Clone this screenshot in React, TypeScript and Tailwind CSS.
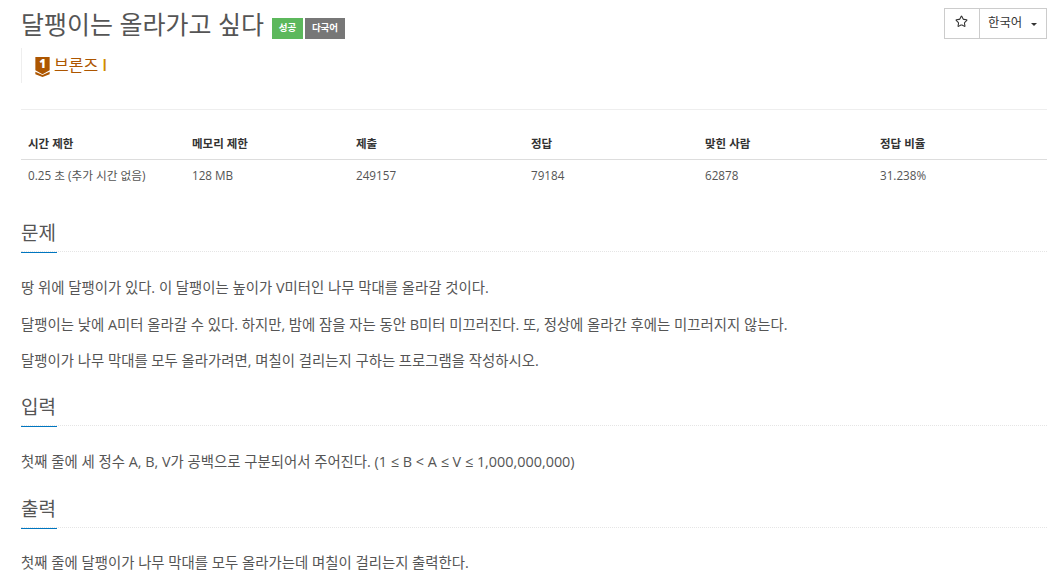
import { Star } from "lucide-react";

const columns = [
  { title: "시간 제한", value: "0.25 초 (추가 시간 없음)", width: "w-[164px]" },
  { title: "메모리 제한", value: "128 MB", width: "w-[164px]" },
  { title: "제출", value: "249157", width: "w-[175px]" },
  { title: "정답", value: "79184", width: "w-[174px]" },
  { title: "맞힌 사람", value: "62878", width: "w-[175px]" },
  { title: "정답 비율", value: "31.238%", width: "flex-1" },
];

const font = "font-['Open_Sans','Noto_Sans_CJK_KR',sans-serif]";

const Headline = ({ children, className }: { children: string; className: string }) => (
  <div className={`${className} h-[34px] border-b border-dotted border-[#e5e5e5]`}>
    <h2 className="inline-block h-[35px] w-[36px] whitespace-nowrap border-b border-[#0076c0] pt-[1px] text-[19px] leading-[28px] text-[#555]">
      {children}
    </h2>
  </div>
);

const Para = ({ children }: { children: string }) => (
  <p className="mt-[14.5px] h-[22px] text-[14.4px] leading-[22px] text-[#555]">{children}</p>
);

export default function App() {
  return (
    <div className={`${font} h-[584px] w-[1055px] overflow-hidden bg-white pl-[21px] pr-[8px] text-[#333]`}>
      <div className="flex items-start justify-between pt-[7px]">
        <div className="flex items-start">
          <h1 className="text-[25px] leading-[34px] text-[#555]">달팽이는 올라가고 싶다</h1>
          <span className="ml-[8px] mt-[11px] flex h-[21px] w-[31px] items-center justify-center bg-[#5cb85c] text-[9.5px] font-semibold text-white">
            성공
          </span>
          <span className="ml-[2px] mt-[11px] flex h-[21px] w-[40px] items-center justify-center bg-[#777] text-[9.5px] font-semibold text-white">
            다국어
          </span>
        </div>
        <div className="mt-[1px] flex h-[31px]">
          <button className="flex w-[36px] items-center justify-center border border-[#ccc] pb-[4px] pr-[1px] text-[#333]">
            <Star size={13} strokeWidth={2} />
          </button>
          <button className="ml-[-1px] flex w-[68px] items-center border border-[#ccc] pb-[1px] pl-[8px] text-[12.4px] text-[#333]">
            한국어
            <span className="ml-[9px] mt-[2px] border-x-[3px] border-t-[3px] border-x-transparent border-t-[#333]" />
          </button>
        </div>
      </div>

      <div className="mt-[7px] flex h-[35px] items-center border-l border-[#eee] pl-[13px]">
        <svg width="15" height="20" viewBox="0 0 15 21" className="mt-[2px]">
          <path d="M0 0h15v14l-7.5 4L0 14z" fill="#ad5600" />
          <path d="M0 15.5l7.5 3.5 7.5-3.5V18l-7.5 3L0 18z" fill="#ad5600" />
          <text x="7.5" y="12" textAnchor="middle" fontSize="12" fontWeight="800" fill="#fff">
            1
          </text>
        </svg>
        <span className="mb-[2px] ml-[4px] text-[16px] leading-[22px] text-[#ad5600]">브론즈</span>
        <span className="mb-[2px] ml-[4px] text-[16px] font-semibold leading-[22px] text-[#d28a00]">I</span>
      </div>

      <div className="mt-[26px] border-t border-[#eee] pt-[16px]">
        <div className="flex h-[34px] border-b border-[#ddd] pt-[1px] text-[11.5px] font-bold leading-[34px] text-[#333]">
          {columns.map((c) => (
            <div key={c.title} className={`${c.width} pl-[7px]`}>
              {c.title}
            </div>
          ))}
        </div>
        <div className="flex h-[31px] text-[11.7px] leading-[31px] text-[#555]">
          {columns.map((c) => (
            <div key={c.title} className={`${c.width} pl-[7px]`}>
              {c.value}
            </div>
          ))}
        </div>
      </div>

      <Headline className="mb-[25px] mt-[27px]">문제</Headline>
      <Para>땅 위에 달팽이가 있다. 이 달팽이는 높이가 V미터인 나무 막대를 올라갈 것이다.</Para>
      <Para>달팽이는 낮에 A미터 올라갈 수 있다. 하지만, 밤에 잠을 자는 동안 B미터 미끄러진다. 또, 정상에 올라간 후에는 미끄러지지 않는다.</Para>
      <Para>달팽이가 나무 막대를 모두 올라가려면, 며칠이 걸리는지 구하는 프로그램을 작성하시오.</Para>

      <Headline className="mb-[25px] mt-[20px]">입력</Headline>
      <Para>첫째 줄에 세 정수 A, B, V가 공백으로 구분되어서 주어진다. (1 ≤ B &lt; A ≤ V ≤ 1,000,000,000)</Para>

      <Headline className="mb-[24px] mt-[21px]">출력</Headline>
      <Para>첫째 줄에 달팽이가 나무 막대를 모두 올라가는데 며칠이 걸리는지 출력한다.</Para>
    </div>
  );
}
